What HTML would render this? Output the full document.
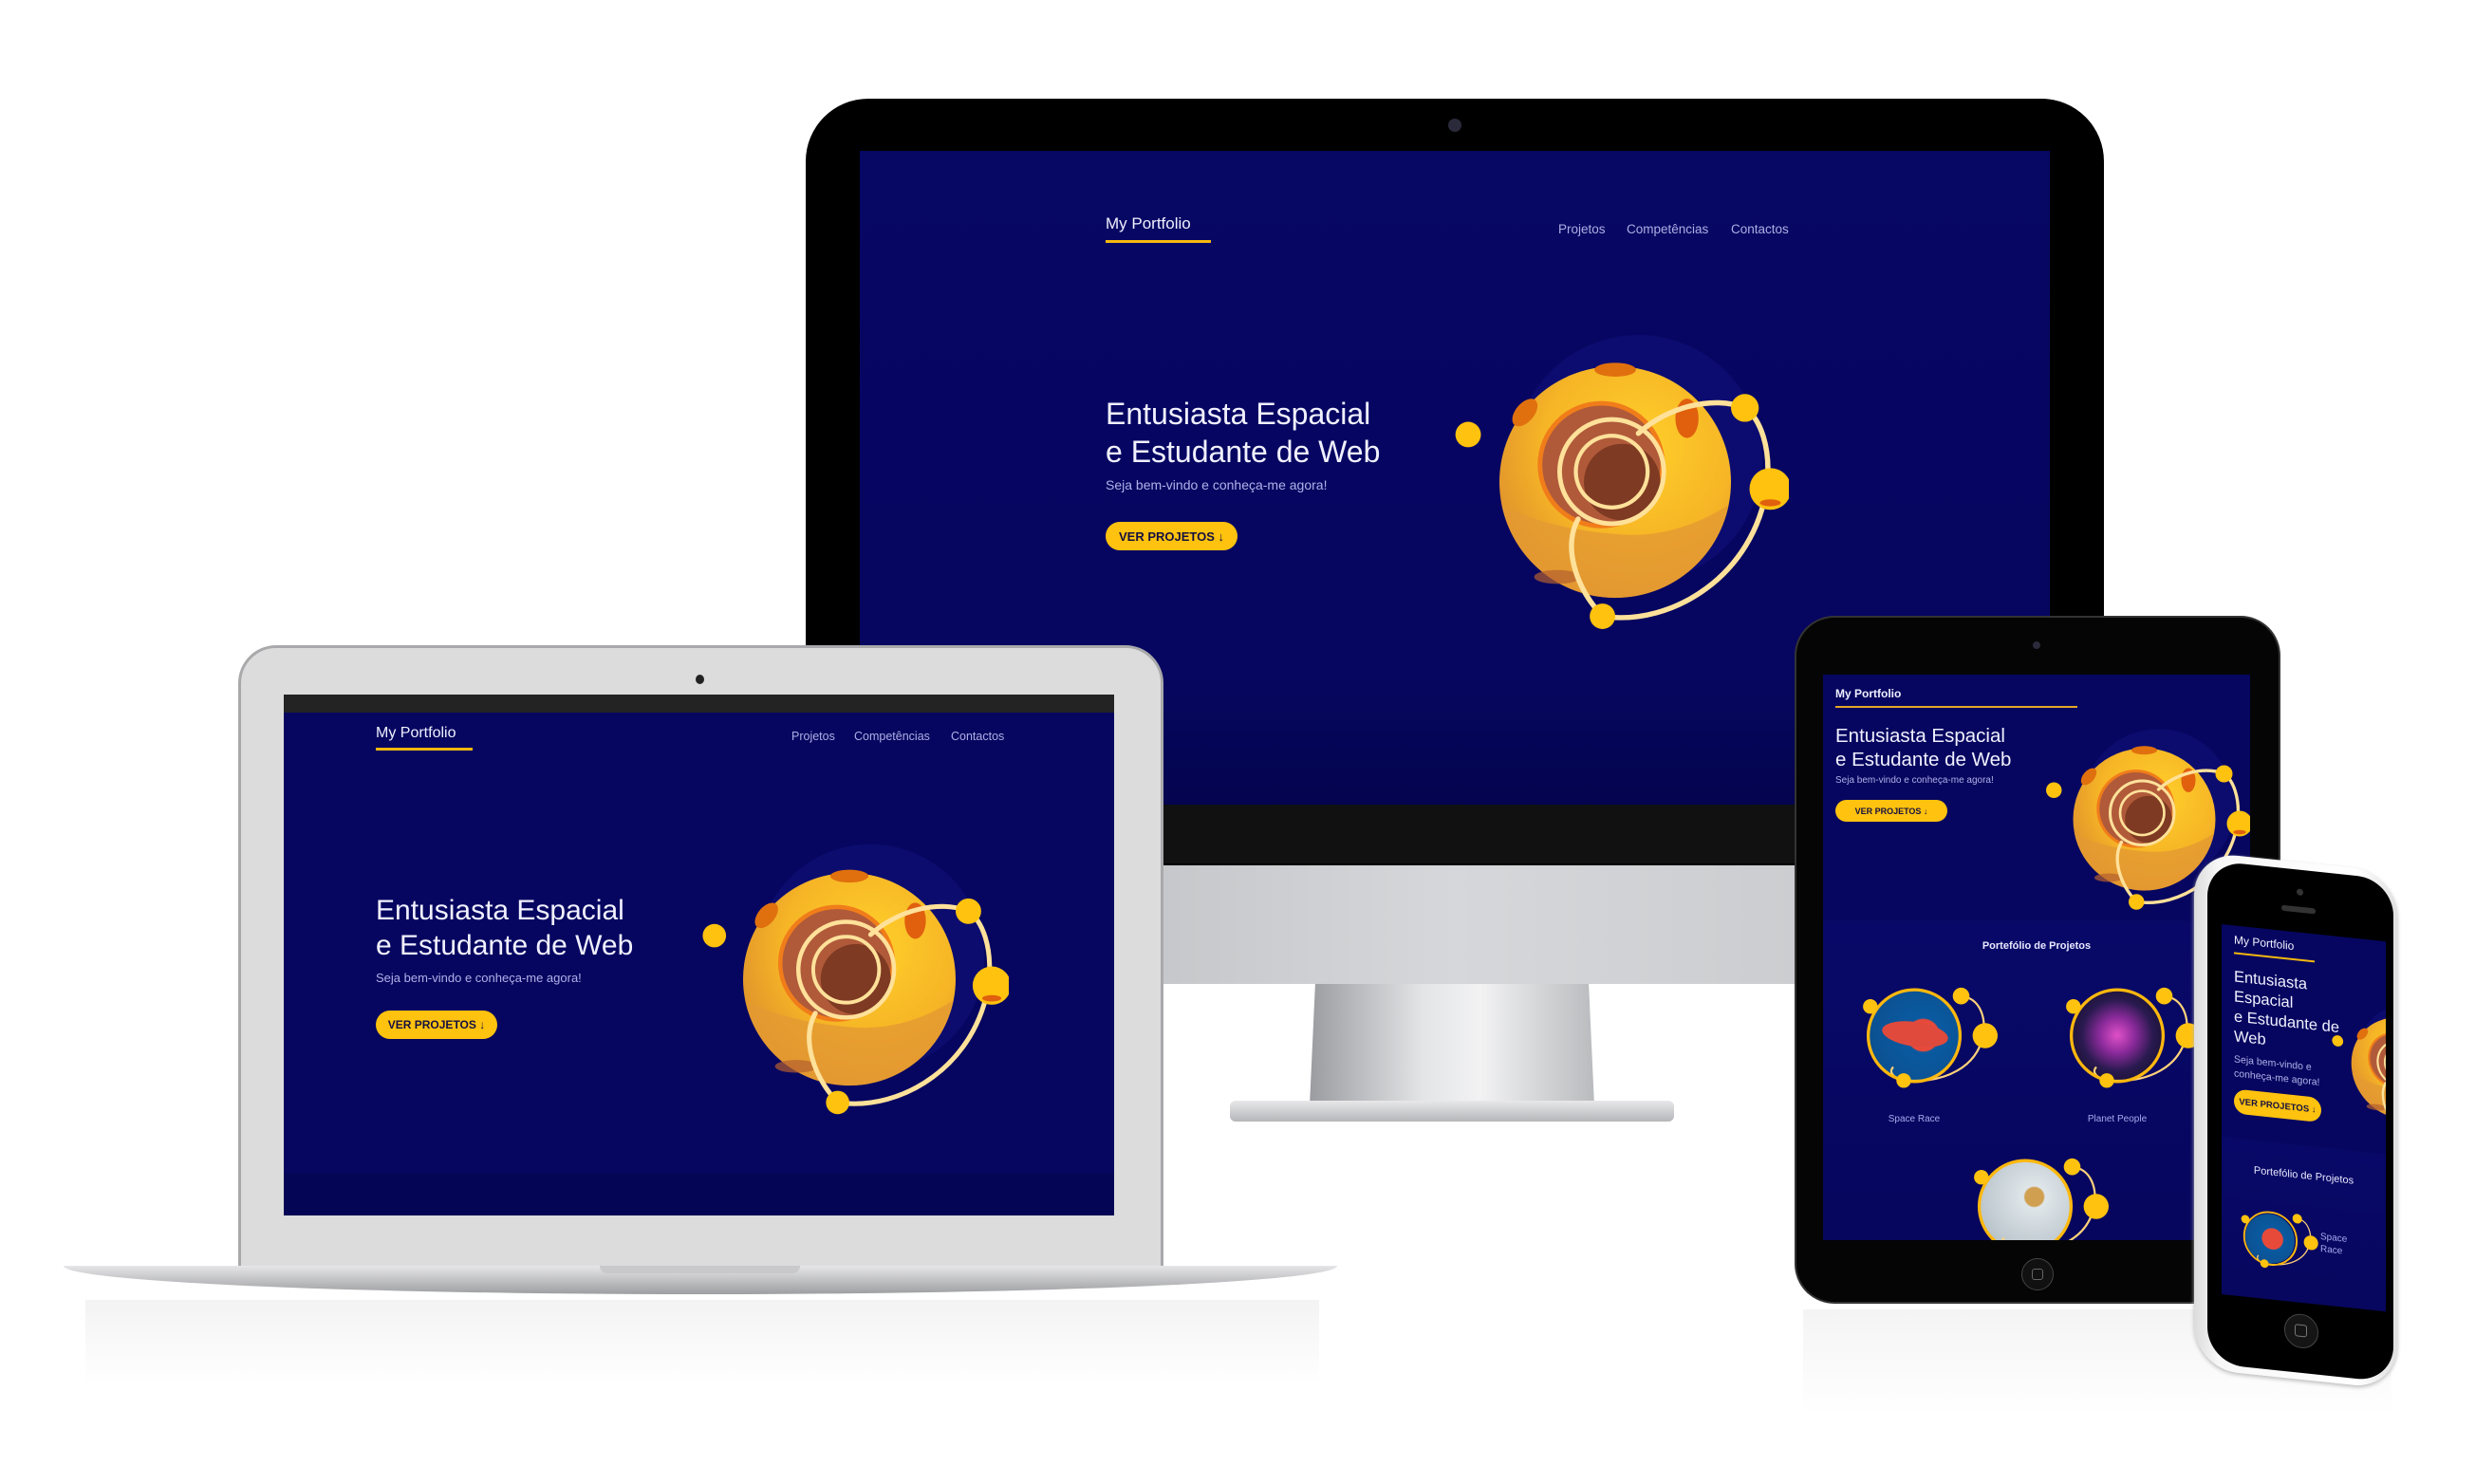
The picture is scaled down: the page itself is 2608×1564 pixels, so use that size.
<!DOCTYPE html>
<html><head><meta charset="utf-8">
<style>
*{margin:0;padding:0;box-sizing:border-box}
html,body{width:2608px;height:1564px;background:#fff;overflow:hidden;position:relative;font-family:"Liberation Sans",sans-serif}
.a{position:absolute}
.blue{background:#060660}
.t{position:absolute;white-space:nowrap}
.btn{position:absolute;background:#ffc20e;color:#141040;border-radius:40px;font-weight:bold;display:flex;align-items:center;justify-content:center;white-space:nowrap}
svg.pl{position:absolute;overflow:visible}
</style></head><body>
<svg width="0" height="0" style="position:absolute">
<defs>
<radialGradient id="pg" cx="60%" cy="35%" r="75%">
<stop offset="0" stop-color="#ffd02a"/><stop offset=".55" stop-color="#f6b526"/><stop offset="1" stop-color="#d9872e"/>
</radialGradient>
<symbol id="planet" viewBox="0 0 300 300">
<circle cx="170" cy="130" r="107" fill="#10107a" opacity=".6"/>
<circle cx="23" cy="109" r="11" fill="#ffc20e"/>
<circle cx="150" cy="150" r="100" fill="url(#pg)"/>
<path d="M52 170 A100 100 0 0 0 248 170 Q200 200 150 195 Q90 190 52 170Z" fill="#e39a32" opacity=".8"/>
<circle cx="138" cy="135" r="55" fill="#f07d1a"/>
<circle cx="138" cy="135" r="51" fill="#b05a3a"/>
<circle cx="156" cy="150" r="33" fill="#7e3a22"/>
<ellipse cx="212" cy="95" rx="10" ry="17" fill="#e0600e"/>
<ellipse cx="150" cy="53" rx="18" ry="6" fill="#e0700e"/>
<ellipse cx="72" cy="90" rx="8" ry="14" fill="#e0700e" transform="rotate(40 72 90)"/>
<ellipse cx="100" cy="232" rx="20" ry="6" fill="#b5602e" opacity=".7"/>
<circle cx="147" cy="141" r="45" fill="none" stroke="#ffe19a" stroke-width="4"/>
<circle cx="147" cy="141" r="31" fill="none" stroke="#ffe19a" stroke-width="3.5"/>
<g fill="none" stroke="#ffe19a" stroke-width="4.5" stroke-linecap="round">
<path d="M139 266 C200 275 270 230 281 154 C285 120 275 95 262 86 C235 75 195 85 170 108"/>
<path d="M139 266 C115 240 105 205 118 182"/>
</g>
<circle cx="262" cy="86" r="12" fill="#ffc20e"/>
<circle cx="284" cy="156" r="18" fill="#ffc20e"/>
<ellipse cx="284" cy="168" rx="9" ry="3" fill="#e0600e"/>
<circle cx="139" cy="266" r="11" fill="#ffc20e"/>
</symbol>
<symbol id="proj" viewBox="0 0 140 120">
<g fill="none" stroke="#ffd27a" stroke-width="2"><path d="M92 18 C110 15 120 35 116 55 C110 85 80 100 45 98 C30 97 25 90 30 85"/></g>
<circle cx="50" cy="55" r="44" fill="none" stroke="#ffb80e" stroke-width="3"/>
<circle cx="8" cy="27" r="7" fill="#ffc20e"/>
<circle cx="95" cy="17" r="8" fill="#ffc20e"/>
<circle cx="118" cy="55" r="12" fill="#ffc20e"/>
<circle cx="40" cy="98" r="7" fill="#ffc20e"/>
</symbol>
</defs></svg>

<!-- reflections -->
<div class="a" style="left:90px;top:1370px;width:1300px;height:90px;background:linear-gradient(#f3f3f3,#fff)"></div>
<div class="a" style="left:1900px;top:1380px;width:620px;height:110px;background:linear-gradient(#f4f4f4,#fff)"></div>

<!-- MONITOR -->
<div class="a" style="left:1380px;top:1035px;width:300px;height:130px;background:linear-gradient(90deg,#9a9ca0,#e4e5e7 40%,#f2f2f3 60%,#b9bbbe);clip-path:polygon(2% 0,98% 0,100% 100%,0 100%)"></div>
<div class="a" style="left:1296px;top:1160px;width:468px;height:22px;border-radius:6px;background:linear-gradient(#e8e8ea,#b5b6b9)"></div>
<div class="a" style="left:849px;top:860px;width:1368px;height:177px;background:linear-gradient(90deg,#b3b5b8,#d6d7da 50%,#c2c4c7)"></div>
<div class="a" style="left:849px;top:104px;width:1368px;height:808px;background:#000;border-radius:66px 66px 0 0"></div>
<div class="a" style="left:1526px;top:125px;width:14px;height:14px;border-radius:50%;background:#2a2a3a"></div>
<div class="a" style="left:906px;top:848px;width:1254px;height:62px;background:#111"></div>
<div class="a blue" style="left:906px;top:159px;width:1254px;height:689px;overflow:hidden;background:linear-gradient(#070764 0,#060660 80%,#04044f 100%)">
 <div class="t" style="left:259px;top:67px;font-size:17px;color:#f0f0ff">My Portfolio</div>
 <div class="a" style="left:259px;top:94px;width:111px;height:3px;background:#f5b80e"></div>
 <div class="t" style="left:736px;top:75px;font-size:13.5px;color:#aeaee6">Projetos</div>
 <div class="t" style="left:808px;top:75px;font-size:13.5px;color:#aeaee6">Competências</div>
 <div class="t" style="left:918px;top:75px;font-size:13.5px;color:#aeaee6">Contactos</div>
 <div class="t" style="left:259px;top:257px;font-size:32px;line-height:40px;color:#f0f0ff">Entusiasta Espacial<br>e Estudante de Web</div>
 <div class="t" style="left:259px;top:344px;font-size:14px;color:#b0b0ea">Seja bem-vindo e conheça-me agora!</div>
 <div class="btn" style="left:259px;top:391px;width:139px;height:30px;font-size:13px">VER PROJETOS ↓</div>
 <svg class="pl" style="left:613px;top:166px" width="366" height="366"><use href="#planet"/></svg>
</div>

<!-- LAPTOP -->
<div class="a" style="left:251px;top:680px;width:975px;height:660px;border-radius:40px 40px 0 0;background:#dcdcdd;border:3px solid #a9a9ab"></div>
<div class="a" style="left:733px;top:711px;width:9px;height:10px;border-radius:50%;background:#222"></div>
<div class="a" style="left:299px;top:732px;width:875px;height:549px;background:#060660;overflow:hidden">
 <div class="a" style="left:0;top:0;width:875px;height:19px;background:#232323"></div>
 <div class="a" style="left:0;top:505px;width:875px;height:44px;background:#050555"></div>
 <div class="t" style="left:97px;top:32px;font-size:16px;color:#f0f0ff">My Portfolio</div>
 <div class="a" style="left:97px;top:56px;width:102px;height:3px;background:#f5b80e"></div>
 <div class="t" style="left:535px;top:37px;font-size:12.5px;color:#aeaee6">Projetos</div>
 <div class="t" style="left:601px;top:37px;font-size:12.5px;color:#aeaee6">Competências</div>
 <div class="t" style="left:703px;top:37px;font-size:12.5px;color:#aeaee6">Contactos</div>
 <div class="t" style="left:97px;top:209px;font-size:30px;line-height:37px;color:#f0f0ff">Entusiasta Espacial<br>e Estudante de Web</div>
 <div class="t" style="left:97px;top:291px;font-size:13px;color:#b0b0ea">Seja bem-vindo e conheça-me agora!</div>
 <div class="btn" style="left:97px;top:333px;width:128px;height:30px;font-size:12px">VER PROJETOS ↓</div>
 <svg class="pl" style="left:428px;top:132px" width="336" height="336"><use href="#planet"/></svg>
</div>
<div class="a" style="left:67px;top:1334px;width:1342px;height:30px;background:linear-gradient(#e6e6e8,#9d9ea1);border-radius:0 0 50% 50%/0 0 100% 100%"></div>
<div class="a" style="left:632px;top:1334px;width:211px;height:8px;background:#c9c9cc;border-radius:0 0 8px 8px"></div>

<!-- TABLET -->
<div class="a" style="left:1891px;top:649px;width:512px;height:725px;background:#050505;border-radius:42px;border:2px solid #333"></div>
<div class="a" style="left:2142px;top:676px;width:8px;height:8px;border-radius:50%;background:#2a2a3a"></div>
<div class="a" style="left:2130px;top:1326px;width:34px;height:34px;border-radius:50%;background:#111;border:1px solid #444"></div>
<div class="a" style="left:2141px;top:1337px;width:12px;height:12px;border-radius:3px;border:1.5px solid #666"></div>
<div class="a" style="left:1921px;top:711px;width:450px;height:596px;overflow:hidden;background:linear-gradient(#060660 0,#060660 43%,#080868 44%,#06065e 100%)">
 <div class="t" style="left:13px;top:13px;font-size:12px;font-weight:bold;color:#f0f0ff">My Portfolio</div>
 <div class="a" style="left:13px;top:33px;width:255px;height:2px;background:#e5a626"></div>
 <div class="t" style="left:13px;top:52px;font-size:20.5px;line-height:25px;color:#f0f0ff">Entusiasta Espacial<br>e Estudante de Web</div>
 <div class="t" style="left:13px;top:106px;font-size:10px;color:#b0b0ea">Seja bem-vindo e conheça-me agora!</div>
 <div class="btn" style="left:13px;top:132px;width:118px;height:23px;font-size:9px">VER PROJETOS ↓</div>
 <svg class="pl" style="left:226px;top:40px" width="225" height="225"><use href="#planet"/></svg>
 <div class="t" style="left:0;width:450px;text-align:center;top:280px;font-size:11px;font-weight:bold;color:#e8e8ff">Portefólio de Projetos</div>
 <div class="a" style="left:48px;top:332px;width:96px;height:96px;border-radius:50%;background:radial-gradient(circle at 60% 50%,#e84a3a 0 22%,#0a5aa0 24%,#0c4c8a 100%)"></div>
 <div class="a" style="left:62px;top:366px;width:70px;height:26px;border-radius:50%;background:#e04a3c;transform:rotate(8deg)"></div>
 <div class="a" style="left:262px;top:332px;width:96px;height:96px;border-radius:50%;background:radial-gradient(circle at 50% 50%,#e050c8 0,#8a2a9a 28%,#2a1a50 55%,#0a0a1a 100%)"></div>
 <svg class="a" style="left:41px;top:320px" width="154" height="132" viewBox="0 0 140 120"><use href="#proj"/></svg>
 <svg class="a" style="left:255px;top:320px" width="154" height="132" viewBox="0 0 140 120"><use href="#proj"/></svg>
 <div class="t" style="left:40px;width:112px;text-align:center;top:463px;font-size:10px;color:#a8a8ee">Space Race</div>
 <div class="t" style="left:254px;width:112px;text-align:center;top:463px;font-size:10px;color:#a8a8ee">Planet People</div>
 <div class="a" style="left:165px;top:512px;width:96px;height:96px;border-radius:50%;background:radial-gradient(circle at 60% 40%,#d0a050 0 12%,#dfe6ea 14%,#a9b5bd 100%)"></div>
 <svg class="a" style="left:158px;top:500px" width="154" height="132" viewBox="0 0 140 120"><use href="#proj"/></svg>
</div>

<!-- PHONE -->
<div class="a" style="left:2312px;top:897px;width:214px;height:560px;transform:skewY(6deg);transform-origin:0 0">
 <div class="a" style="left:0;top:0;width:214px;height:545px;background:linear-gradient(90deg,#dcdcdc,#f7f7f7 12%,#fff 80%,#e0e0e0);border-radius:46px;box-shadow:0 2px 4px #bbb"></div>
 <div class="a" style="left:14px;top:8px;width:196px;height:530px;background:#000;border-radius:38px"></div>
 <div class="a" style="left:108px;top:28px;width:7px;height:7px;border-radius:50%;background:#333"></div>
 <div class="a" style="left:92px;top:47px;width:36px;height:6px;border-radius:4px;background:#333"></div>
 <div class="a" style="left:95px;top:476px;width:36px;height:36px;border-radius:50%;background:#151515;border:1px solid #444"></div>
 <div class="a" style="left:106px;top:487px;width:13px;height:13px;border-radius:3px;border:1.5px solid #777"></div>
 <div class="a" style="left:29px;top:74px;width:173px;height:390px;overflow:hidden;background:linear-gradient(#060660 0,#060660 57%,#080868 58%,#07075f 100%)">
  <div class="t" style="left:13px;top:8px;font-size:12px;color:#f0f0ff">My Portfolio</div>
  <div class="a" style="left:13px;top:28px;width:85px;height:2px;background:#f5b80e"></div>
  <div class="t" style="left:13px;top:44px;font-size:16.5px;line-height:21px;color:#f0f0ff">Entusiasta<br>Espacial<br>e Estudante de<br>Web</div>
  <div class="t" style="left:13px;top:134px;font-size:10.5px;line-height:15px;color:#b0b0ea">Seja bem-vindo e<br>conheça-me agora!</div>
  <div class="btn" style="left:13px;top:172px;width:92px;height:26px;font-size:9.5px">VER PROJETOS ↓</div>
  <svg class="pl" style="left:110px;top:52px" width="160" height="160"><use href="#planet"/></svg>
  <div class="t" style="left:0;width:173px;text-align:center;top:250px;font-size:11px;color:#e8e8ff">Portefólio de Projetos</div>
  <div class="a" style="left:25px;top:300px;width:52px;height:52px;border-radius:50%;background:radial-gradient(circle at 55% 50%,#e84a3a 0 28%,#0a5aa0 30%,#0c4c8a 100%)"></div>
  <svg class="a" style="left:20px;top:291px" width="88" height="76" viewBox="0 0 140 120"><use href="#proj"/></svg>
  <div class="t" style="left:104px;top:312px;font-size:10px;line-height:13px;color:#a8a8ee">Space<br>Race</div>
 </div>
</div>
</body></html>
